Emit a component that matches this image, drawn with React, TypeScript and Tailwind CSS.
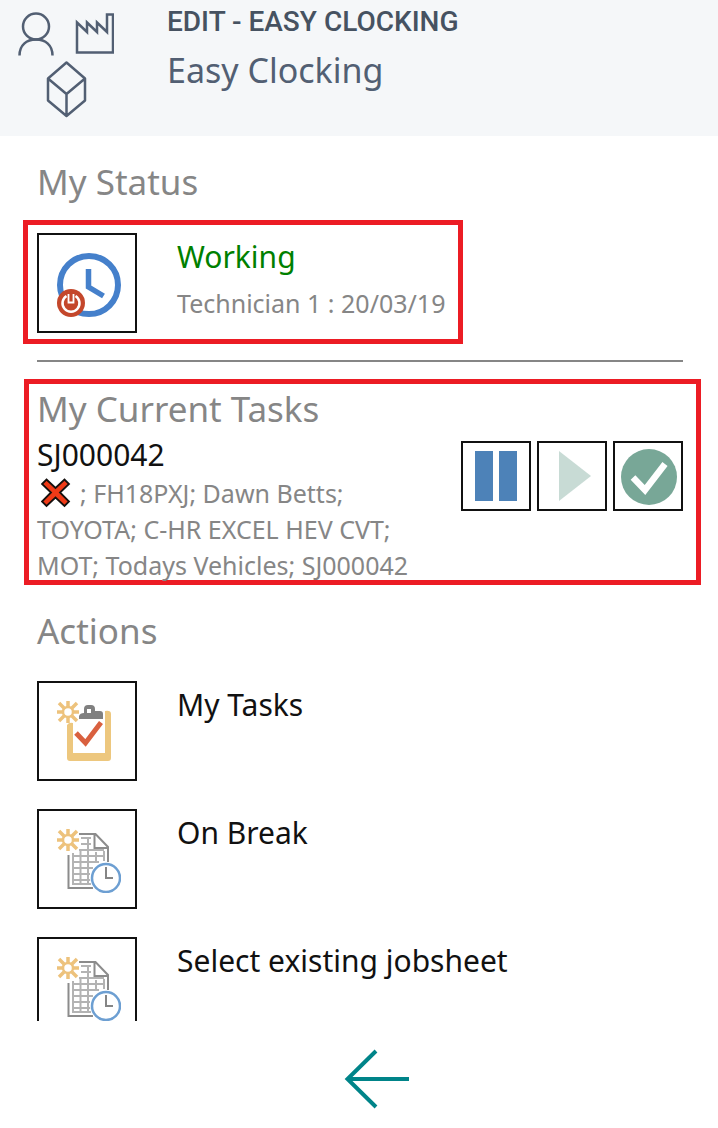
import type { ReactNode } from "react";

function UserIcon() {
  return (
    <svg viewBox="0 0 38 44" className="h-11 w-[38px]" fill="none" stroke="#525f73" strokeWidth="2.5" aria-hidden="true">
      <circle cx="18" cy="14.5" r="13" />
      <path d="M1.500 43.500C1.500 33 8.500 27.500 18 27.500s16.500 5.500 16.500 16" />
    </svg>
  );
}

function FactoryIcon() {
  return (
    <svg viewBox="0 0 40 42" className="h-[42px] w-10" fill="none" stroke="#525f73" strokeWidth="2.5" aria-hidden="true">
      <path d="M3 40.500V10.500L13 20V10.500L23 20V10.500L33 20V2.500H39V40.500Z" />
    </svg>
  );
}

function CubeIcon() {
  return (
    <svg viewBox="0 0 44 58" className="h-[58px] w-11" fill="none" stroke="#525f73" strokeWidth="2.5" strokeLinejoin="round" aria-hidden="true">
      <path d="M22.500 2.500L41 18.500V40.500L22.500 56L4 40.500V18.500ZM4 18.500L22.500 34L41 18.500M22.500 34V56" />
    </svg>
  );
}

function ClockPowerIcon() {
  return (
    <svg viewBox="0 0 64 64" className="size-16" fill="none" aria-hidden="true">
      <circle cx="32" cy="32" r="29" stroke="#4580cb" strokeWidth="6" />
      <path d="M31.500 16V34L46.500 43" stroke="#4580cb" strokeWidth="5.5" />
      <circle cx="14" cy="50" r="14" fill="#c4472b" />
      <path d="M9.500 43a8.500 8.500 0 1 0 9 0" stroke="#fff" strokeWidth="2.5" />
      <path d="M11.500 41v8.500h5V41" stroke="#fff" strokeWidth="1.8" />
    </svg>
  );
}

function Sunburst() {
  return (
    <g stroke="#edc27c" strokeWidth="3.5">
      <path d="M11 0V6M11 16V22M0 11H6M16 11H22M2 2L7 7M15 15L20 20M20 2L15 7M7 15L2 20" />
      <circle cx="11" cy="11" r="5" strokeWidth="2.5" fill="#fff" />
    </g>
  );
}

function ClipboardIcon() {
  return (
    <svg viewBox="0 0 64 64" className="size-16" fill="none" aria-hidden="true">
      <path d="M10 24Q12 21 16 22V52H48V10Q54 9 54 13V57Q54 60 51 60H13Q10 60 10 57Z" fill="#edc77e" />
      <path d="M22 18V15q1-3 5-3V8q0-4 4-4h3q4 0 4 4v2h5q3 0 3 3v5ZM30 8v4h4V8Z" fill="#808080" fillRule="evenodd" />
      <path d="M19 32L28.500 42L44 21.500" stroke="#d9603f" strokeWidth="5" />
      <Sunburst />
    </svg>
  );
}

function TimesheetIcon() {
  return (
    <svg viewBox="0 0 64 64" className="size-16" fill="none" aria-hidden="true">
      <path d="M15 27H47M22 21H47M24 15H34M24 9H34M15 33H42M15 39H36M15 45H33M15 51H34M16 24V55M23.500 20V55M31 9V55M39 23V34M47 22V32M15 55H34" stroke="#b3b3b3" strokeWidth="2" />
      <path d="M11.500 26V59H36M22 5H38.500L51 18V33M37.500 5V19H51" stroke="#8c8c8c" strokeWidth="2" />
      <circle cx="49" cy="49" r="16" fill="#fff" />
      <circle cx="49" cy="49" r="14" stroke="#6d9fd2" strokeWidth="2.5" />
      <path d="M49 38V49H56" stroke="#858585" strokeWidth="2" />
      <Sunburst />
    </svg>
  );
}

function CrossIcon() {
  return (
    <svg viewBox="0 0 30 30" className="size-[30px]" aria-label="Not started" role="img">
      <path d="M5.500 1.500L14.500 10L23.500 1.500L28 6L19 14.500L28 23.500L23.500 28L14.500 19.500L5.500 28L1 23.500L10 14.500L1 6Z" fill="#f03a17" stroke="#15100e" strokeWidth="1.8" />
    </svg>
  );
}

function PauseIcon() {
  return (
    <svg viewBox="0 0 66 66" className="size-[66px]" fill="#4d82b8" aria-hidden="true">
      <path d="M12 8H30V58H12ZM36 8H54V58H36Z" />
    </svg>
  );
}

function PlayIcon() {
  return (
    <svg viewBox="0 0 66 66" className="size-[66px]" fill="#c8dbd5" aria-hidden="true">
      <path d="M20 8L52 33L20 58Z" />
    </svg>
  );
}

function DoneIcon() {
  return (
    <svg viewBox="0 0 66 66" className="size-[66px]" fill="none" aria-hidden="true">
      <circle cx="34" cy="34" r="28" fill="#78a797" />
      <path d="M18 34.500L30 47L50 21" stroke="#fff" strokeWidth="6.5" />
    </svg>
  );
}

function Tile({ label, children }: { label: string; children: ReactNode }) {
  return (
    <button type="button" aria-label={label} className="flex size-[100px] shrink-0 items-center justify-center border-2 border-[#111] bg-white pt-1 pl-1">
      {children}
    </button>
  );
}

function TaskButton({ label, disabled, children }: { label: string; disabled?: boolean; children: ReactNode }) {
  return (
    <button type="button" aria-label={label} disabled={disabled} className="size-[70px] shrink-0 border-2 border-[#111] bg-white">
      {children}
    </button>
  );
}

const actions = [
  { label: "My Tasks", icon: <ClipboardIcon /> },
  { label: "On Break", icon: <TimesheetIcon /> },
  { label: "Select existing jobsheet", icon: <TimesheetIcon /> },
];

export default function App() {
  return (
    <div className="flex min-h-screen flex-col bg-white font-['Noto_Sans',sans-serif] text-[#868686]">
      <header className="flex h-[136px] bg-[#f5f7f9]">
        <div className="flex w-[167px] shrink-0 flex-col pt-3 pl-[18px]">
          <div className="flex gap-[18px]">
            <UserIcon />
            <FactoryIcon />
          </div>
          <div className="pt-1 pl-[26px]">
            <CubeIcon />
          </div>
        </div>
        <div className="pt-1">
          <p className="font-['Roboto',sans-serif] text-[28px] leading-9 font-medium text-[#465261]">EDIT - EASY CLOCKING</p>
          <h1 className="pt-[6px] text-[34px] leading-12 text-[#525f73]">Easy Clocking</h1>
        </div>
      </header>

      <main className="pr-[35px] pl-[37px]">
        <h2 className="pt-[22px] text-[35px] leading-12">My Status</h2>
        <section className="mt-[14px] -ml-[14px] flex w-[440px] max-w-full gap-10 border-5 border-[#ec1c24] pt-2 pb-[6px] pl-[9px]">
          <Tile label="Clock out">
            <ClockPowerIcon />
          </Tile>
          <div className="whitespace-nowrap">
            <p className="text-[30px] leading-12 text-[#008000]">Working</p>
            <p className="pt-1 text-[25px] leading-9">Technician 1 : 20/03/19</p>
          </div>
        </section>

        <hr className="mt-4 border-t-2 border-[#868686]" />

        <section className="mt-[17px] -mr-[18px] -ml-[13px] h-[206px] border-5 border-[#ec1c24] pr-[13px] pl-2">
          <h2 className="text-[35px] leading-[50px]">My Current Tasks</h2>
          <div className="flex items-start justify-between">
            <div className="w-[390px] shrink-0">
              <h3 className="text-[30px] leading-[41px] text-[#111]">SJ000042</h3>
              <div className="text-[25px] leading-9 whitespace-nowrap">
                <div className="flex items-center gap-[9px] pl-1">
                  <CrossIcon />
                  <span>; FH18PXJ; Dawn Betts;</span>
                </div>
                <p>TOYOTA; C-HR EXCEL HEV CVT;</p>
                <p>MOT; Todays Vehicles; SJ000042</p>
              </div>
            </div>
            <div className="flex gap-[6px] pt-[7px]">
              <TaskButton label="Pause">
                <PauseIcon />
              </TaskButton>
              <TaskButton label="Start" disabled>
                <PlayIcon />
              </TaskButton>
              <TaskButton label="Finish">
                <DoneIcon />
              </TaskButton>
            </div>
          </div>
        </section>

        <h2 className="pt-[22px] text-[35px] leading-12">Actions</h2>
        <ul className="mt-[26px] flex h-[340px] flex-col gap-7 overflow-hidden">
          {actions.map((action) => (
            <li key={action.label} className="flex gap-10">
              <Tile label={action.label}>{action.icon}</Tile>
              <span className="text-[30px] leading-12 text-[#111]">{action.label}</span>
            </li>
          ))}
        </ul>
      </main>

      <footer className="flex justify-center pt-7 pl-9">
        <button type="button" aria-label="Back" className="block">
          <svg viewBox="0 0 66 60" className="h-[60px] w-[66px]" fill="none" stroke="#008489" strokeWidth="4" aria-hidden="true">
            <path d="M65 30H4M32 2L3.500 30L32 58" />
          </svg>
        </button>
      </footer>
    </div>
  );
}
